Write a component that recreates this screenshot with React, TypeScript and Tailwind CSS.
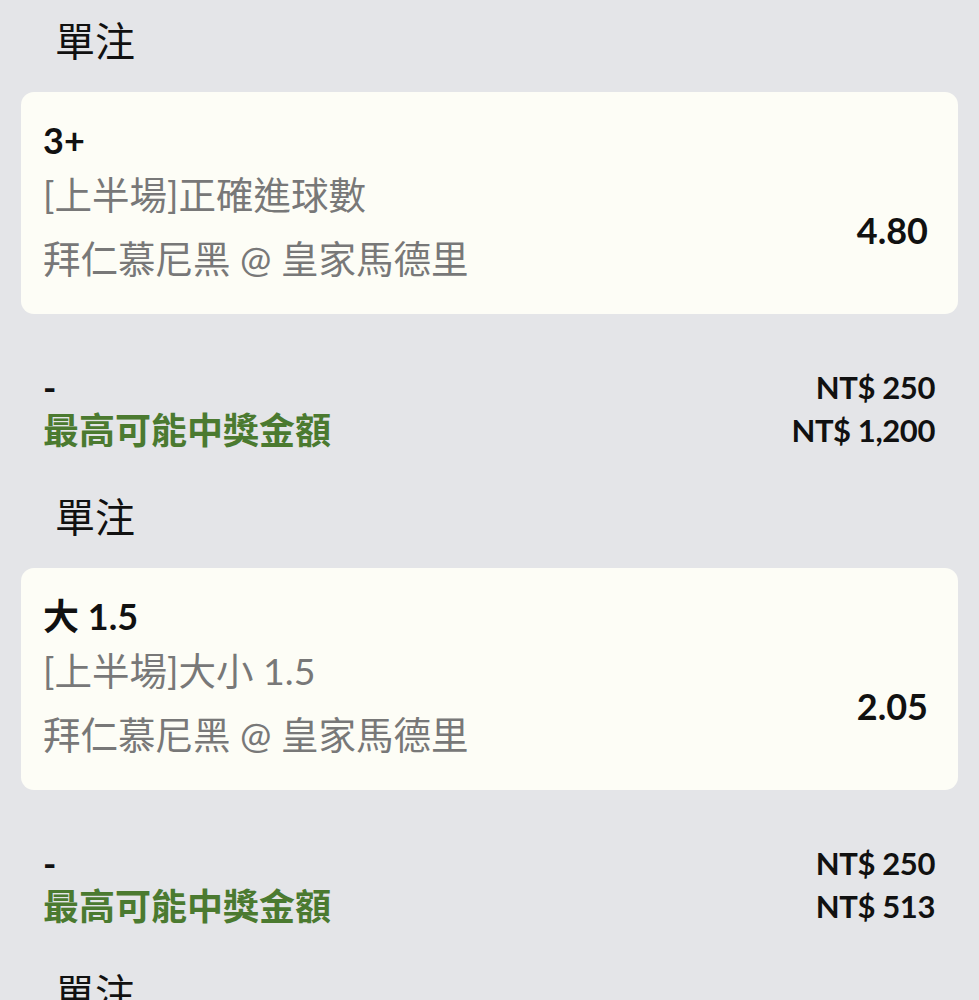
interface Bet {
    pick: string;
    market: string;
    match: string;
    odds: string;
    stake: string;
    payout: string;
}

const bets: Bet[] = [
    {
        pick: '3+',
        market: '[上半場]正確進球數',
        match: '拜仁慕尼黑 @ 皇家馬德里',
        odds: '4.80',
        stake: 'NT$ 250',
        payout: 'NT$ 1,200',
    },
    {
        pick: '大 1.5',
        market: '[上半場]大小 1.5',
        match: '拜仁慕尼黑 @ 皇家馬德里',
        odds: '2.05',
        stake: 'NT$ 250',
        payout: 'NT$ 513',
    },
    {
        pick: '',
        market: '',
        match: '',
        odds: '',
        stake: '',
        payout: '',
    },
];

function BetBlock({ bet }: { bet: Bet }) {
    return (
        <section className="pb-[24px]">
            <h2 className="pl-[55px] pt-[13px] text-[40px] leading-[56px] font-normal text-[#111]">單注</h2>

            <div className="mx-[21px] mt-[23px] flex h-[222px] justify-between rounded-[13px] bg-[#fdfdf6] pl-[22px] pr-[30px]">
                <div>
                    <p className="pt-[28px] text-[36px] leading-[40px] font-bold text-[#111]">{bet.pick}</p>
                    <p className="mt-[3px] text-[37.5px] leading-[64px] text-[#787878]">{bet.market}</p>
                    <p className="text-[37.5px] leading-[64px] text-[#787878]">{bet.match}</p>
                </div>
                <p className="pt-[118px] text-[36px] leading-[40px] font-bold text-[#111]">{bet.odds}</p>
            </div>

            <div className="mt-[52px] flex justify-between pl-[43px] pr-[44px]">
                <div className="text-[36px] leading-[43px] font-bold">
                    <p className="text-[#111]">-</p>
                    <p className="text-[#4b7a30]">最高可能中獎金額</p>
                </div>
                <div className="text-right text-[31px] leading-[43px] font-bold tracking-[-0.4px] text-[#111]">
                    <p>{bet.stake}</p>
                    <p>{bet.payout}</p>
                </div>
            </div>
        </section>
    );
}

export default function App() {
    return (
        <div
            className="h-[1000px] w-full overflow-hidden bg-[#e4e5e8]"
            style={{ fontFamily: 'Lato, "Noto Sans CJK TC", "Noto Sans", sans-serif' }}
        >
            {bets.map((bet, idx) => (
                <BetBlock key={idx} bet={bet} />
            ))}
        </div>
    );
}
